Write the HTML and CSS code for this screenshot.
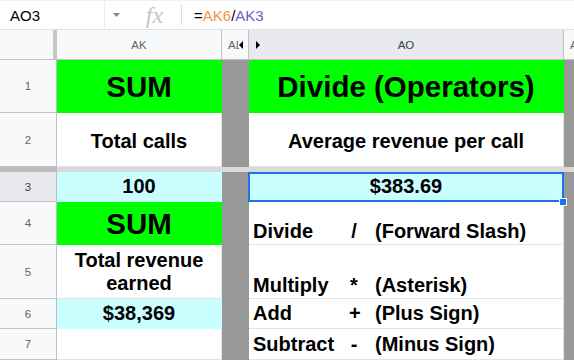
FILE: index.html
```html
<!DOCTYPE html>
<html lang="en">
<head>
    <meta charset="UTF-8">
    <title>Divide (Operators)</title>
    <link rel="stylesheet" href="styles.css">
</head>
<body>
    <div class="formula-bar">
        <div class="name-box">AO3</div>
        <div class="name-drop">
            <svg width="7" height="4" viewBox="0 0 7 4"><path d="M0 0h7L3.5 4z" fill="#80868b"/></svg>
        </div>
        <div class="fx">fx</div>
        <div class="fb-sep"></div>
        <div class="formula">=<span class="ref-a">AK6</span>/<span class="ref-b">AK3</span></div>
    </div>

    <div class="sheet">
        <!-- column headers -->
        <div class="corner"></div>
        <div class="ch">AK</div>
        <div class="ch ch-hidden"><span>AL</span><i class="tri-left"></i></div>
        <div class="ch ch-sel"><i class="tri-right"></i>AO</div>
        <div class="ch ch-edge">A</div>

        <!-- row 1 -->
        <div class="rh">1</div>
        <div class="c green big">SUM</div>
        <div class="c hid"></div>
        <div class="c green big">Divide (Operators)</div>
        <div class="c hid"></div>

        <!-- row 2 -->
        <div class="rh">2</div>
        <div class="c mid">Total calls</div>
        <div class="c hid"></div>
        <div class="c mid">Average revenue per call</div>
        <div class="c hid"></div>

        <!-- frozen rows divider -->
        <div class="freeze-rh"></div>
        <div class="freeze"></div>

        <!-- row 3 -->
        <div class="rh rh-sel">3</div>
        <div class="c cyan">100</div>
        <div class="c hid"></div>
        <div class="c cyan selected">$383.69<span class="fill-handle"></span></div>
        <div class="c hid"></div>

        <!-- row 4 -->
        <div class="rh">4</div>
        <div class="c green big">SUM</div>
        <div class="c hid"></div>
        <div class="c ops low">
            <span class="op-name">Divide</span><span class="op-sym">/</span><span class="op-desc">(Forward Slash)</span>
        </div>
        <div class="c hid"></div>

        <!-- row 5 -->
        <div class="rh">5</div>
        <div class="c wrap">Total revenue earned</div>
        <div class="c hid"></div>
        <div class="c ops low">
            <span class="op-name">Multiply</span><span class="op-sym">*</span><span class="op-desc">(Asterisk)</span>
        </div>
        <div class="c hid"></div>

        <!-- row 6 -->
        <div class="rh">6</div>
        <div class="c cyan">$38,369</div>
        <div class="c hid"></div>
        <div class="c ops">
            <span class="op-name">Add</span><span class="op-sym">+</span><span class="op-desc">(Plus Sign)</span>
        </div>
        <div class="c hid"></div>

        <!-- row 7 -->
        <div class="rh">7</div>
        <div class="c"></div>
        <div class="c hid"></div>
        <div class="c ops">
            <span class="op-name">Subtract</span><span class="op-sym">-</span><span class="op-desc">(Minus Sign)</span>
        </div>
        <div class="c hid"></div>
    </div>
</body>
</html>
```

FILE: styles.css
```css
body {
    margin: 0;
    width: 574px;
    height: 360px;
    overflow: hidden;
    background-color: #fff;
    font-family: "Liberation Sans", Arial, sans-serif;
    color: #000;
}

/* formula bar */
.formula-bar {
    display: flex;
    align-items: center;
    height: 28px;
    border-top: 1px solid #eef0f1;
    border-bottom: 1px solid #e0e0e0;
}
.name-box {
    width: 105px;
    height: 100%;
    box-sizing: border-box;
    padding-left: 10px;
    display: flex;
    align-items: center;
    font-size: 15px;
    border-right: 1px solid #eceff1;
}
.name-drop {
    width: 23px;
    display: flex;
    justify-content: center;
    align-items: center;
}
.fx {
    width: 53px;
    text-align: center;
    font-family: "Liberation Serif", serif;
    font-style: italic;
    font-size: 24px;
    color: #c4c4c4;
    line-height: 28px;
}
.fb-sep {
    width: 1px;
    height: 20px;
    background-color: #dadce0;
}
.formula {
    padding-left: 12px;
    font-size: 15px;
}
.ref-a {
    color: #ee9447;
}
.ref-b {
    color: #7e57c2;
}

/* grid */
.sheet {
    display: grid;
    grid-template-columns: 57px 165px 27px 315px 10px;
    grid-template-rows: 30px 53px 54px 5px 30px 43px 54px 30px 31px;
}
.corner {
    background-color: #f8f9fa;
    border-right: 4px solid #c4c7c5;
    border-bottom: 1px solid #c0c0c0;
    box-sizing: border-box;
}
.ch {
    position: relative;
    display: flex;
    align-items: center;
    justify-content: center;
    box-sizing: border-box;
    background-color: #f8f9fa;
    border-right: 1px solid #c0c0c0;
    border-bottom: 1px solid #c0c0c0;
    font-size: 11.5px;
    color: #5f6368;
}
.ch-hidden {
    justify-content: flex-start;
    padding-left: 6px;
    overflow: hidden;
}
.ch-sel {
    background-color: #e8eaed;
    color: #3c4043;
}
.ch-edge {
    justify-content: flex-start;
    padding-left: 6px;
    overflow: hidden;
    border-right: 0;
}
.tri-left {
    margin-left: -3px;
    border-top: 4px solid transparent;
    border-bottom: 4px solid transparent;
    border-right: 4px solid #000;
    background-color: #f8f9fa;
}
.tri-right {
    position: absolute;
    left: 7px;
    top: 11px;
    border-top: 4px solid transparent;
    border-bottom: 4px solid transparent;
    border-left: 4px solid #000;
}
.rh {
    display: flex;
    align-items: center;
    justify-content: center;
    box-sizing: border-box;
    background-color: #f8f9fa;
    border-right: 1px solid #c0c0c0;
    border-bottom: 1px solid #c0c0c0;
    font-size: 11.5px;
    color: #5f6368;
}
.rh-sel {
    background-color: #e8eaed;
    color: #3c4043;
}
.freeze-rh {
    background-color: #bdbdbd;
}
.freeze {
    grid-column: 2 / 6;
    background-color: #d9dadc;
}

/* cells */
.c {
    position: relative;
    display: flex;
    align-items: center;
    justify-content: center;
    box-sizing: border-box;
    border-right: 1px solid #e2e3e3;
    border-bottom: 1px solid #e2e3e3;
    font-size: 20px;
    font-weight: bold;
    text-align: center;
    white-space: nowrap;
}
.green {
    background-color: #00ff00;
    border-color: transparent;
}
.cyan {
    background-color: #c9ffff;
    border-color: transparent;
}
.hid {
    background-color: #999999;
    border-color: transparent;
}
.big {
    font-size: 29.5px;
    padding-top: 2px;
}
.mid {
    padding-top: 3px;
}
.wrap {
    white-space: normal;
    line-height: 23px;
    padding: 0 10px;
}
.ops {
    justify-content: flex-start;
    padding-left: 4px;
    text-align: left;
}
.ops.low {
    align-items: flex-end;
    padding-bottom: 1px;
}
.op-name {
    display: inline-block;
    width: 96px;
}
.op-sym {
    display: inline-block;
    width: 10px;
    text-align: center;
}
.op-desc {
    margin-left: 16px;
}

/* active cell */
.selected::after {
    content: "";
    position: absolute;
    left: -1px;
    top: 0;
    right: -1px;
    bottom: -1px;
    border: 2px solid #1a73e8;
}
.fill-handle {
    position: absolute;
    right: -4px;
    bottom: -5px;
    width: 6px;
    height: 6px;
    background-color: #1a73e8;
    border: 1px solid #fff;
    z-index: 1;
}
```
